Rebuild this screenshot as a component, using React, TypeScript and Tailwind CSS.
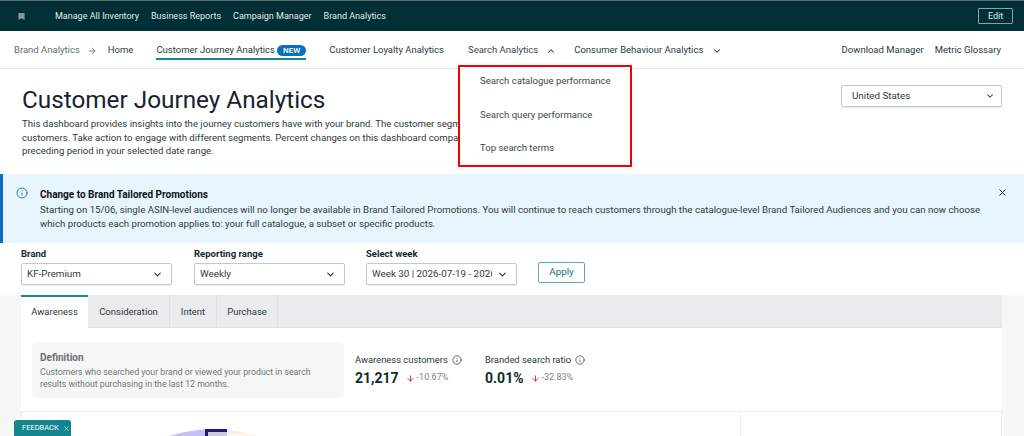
import { ArrowDown, ArrowRight, ChevronDown, ChevronUp, Info, X } from 'lucide-react';

const topLinks = ['Manage All Inventory', 'Business Reports', 'Campaign Manager', 'Brand Analytics'];
const menuItems = ['Search catalogue performance', 'Search query performance', 'Top search terms'];
const tabs = [
  { name: 'Consideration', width: 'w-[82px]' },
  { name: 'Intent', width: 'w-[47px]' },
  { name: 'Purchase', width: 'w-[61px]' },
];

const FilterSelect = ({ label, value, className = '' }: { label: string; value: string; className?: string }) => (
  <div className={`flex flex-col w-[151px] ${className}`}>
    <span className="text-[9.5px] leading-[14px] font-bold text-[#0f2b2e] mb-[2px]">{label}</span>
    <div className="flex items-center justify-between h-[22px] border border-[#c4c8c8] rounded-[2px] bg-white pl-[5px] pr-[8px] pt-[1px] shadow-[0_1px_1px_rgba(0,0,0,0.08)]">
      <span className="text-[9.8px] text-[#343b3c] whitespace-nowrap overflow-hidden w-[120px]">{value}</span>
      <ChevronDown className="w-[11px] h-[11px] text-[#333] shrink-0" strokeWidth={2.5} />
    </div>
  </div>
);

const Metric = ({ label, value, change }: { label: string; value: string; change: string }) => (
  <div className="flex flex-col">
    <div className="flex items-center gap-[4px] text-[9.4px] leading-[14px] text-[#2b3738]">
      {label}
      <Info className="w-[10px] h-[10px]" strokeWidth={1.75} />
    </div>
    <div className="flex items-center mt-[1px]">
      <span className="text-[14px] leading-[20px] font-bold text-[#0f2b2e]">{value}</span>
      <ArrowDown className="w-[9px] h-[9px] text-[#c7254e] ml-[7px]" strokeWidth={2.5} />
      <span className="text-[9px] text-[#7b8485] ml-[2px]">{change}</span>
    </div>
  </div>
);

export default function App() {
  return (
    <div className="relative w-[1024px] h-[436px] overflow-hidden bg-white font-['Roboto',sans-serif]">
      <header className="h-[31px] bg-[#002f36] border-t border-[#5c6b6d] flex items-center pl-[18px] pr-[11px]">
        <svg viewBox="0 0 8 8" className="w-[7px] h-[7px] text-[#8a9a9c]" fill="currentColor">
          <path d="M0.5 0h7v8L4 6 0.5 8z" />
        </svg>
        <nav className="flex gap-[12px] ml-[30px] pt-[1px] text-[9px] text-[#e4eaea]">
          {topLinks.map((link) => (
            <span key={link}>{link}</span>
          ))}
        </nav>
        <button className="ml-auto w-[35px] h-[16px] border border-[#8fa0a2] rounded-[1px] text-[9px] leading-[13px] text-[#e4eaea]">
          Edit
        </button>
      </header>

      <div className="h-[38px] border-b border-[#e3e6e6] flex items-center pl-[14px] pr-[23px] pt-[2px] text-[9.5px] text-[#2b3a3c] whitespace-nowrap">
        <span className="text-[#646f70]">Brand Analytics</span>
        <ArrowRight className="w-[10px] h-[10px] text-[#646f70] ml-[7px]" />
        <span className="ml-[11px]">Home</span>
        <div className="relative flex items-center ml-[23px] h-full">
          <span>Customer Journey Analytics</span>
          <span className="ml-[2px] px-[6px] h-[11px] rounded-full bg-[#0a6fc2] text-white text-[8px] leading-[11px] font-medium">NEW</span>
          <div className="absolute left-0 right-0 bottom-[8px] h-[2px] bg-[#138a94]" />
        </div>
        <span className="ml-[23px]">Customer Loyalty Analytics</span>
        <span className="ml-[24px] text-[#3c4849]">Search Analytics</span>
        <ChevronUp className="w-[10px] h-[10px] ml-[8px]" strokeWidth={2.5} />
        <span className="ml-[18px]">Consumer Behaviour Analytics</span>
        <ChevronDown className="w-[10px] h-[10px] ml-[9px]" strokeWidth={2.5} />
        <span className="ml-auto">Download Manager</span>
        <span className="ml-[11px]">Metric Glossary</span>
      </div>

      <section className="h-[105px] relative pl-[22px] pt-[15px]">
        <h1 className="text-[24.3px] leading-[32px] text-[#16232f]">Customer Journey Analytics</h1>
        <p className="mt-[1px] text-[9.65px] leading-[13.5px] text-[#2f3a3c] whitespace-nowrap">
          This dashboard provides insights into the journey customers have with your brand. The customer segments
          <br />
          customers. Take action to engage with different segments. Percent changes on this dashboard compare
          <br />
          preceding period in your selected date range.
        </p>
        <div className="absolute left-[841px] top-[16px] w-[161px] h-[22px] border border-[#c4c8c8] rounded-[2px] flex items-center justify-between pl-[10px] pr-[6px] text-[9.8px] text-[#343b3c] shadow-[0_1px_1px_rgba(0,0,0,0.08)]">
          United States
          <ChevronDown className="w-[10px] h-[10px]" strokeWidth={2.5} />
        </div>
      </section>

      <section className="h-[69px] bg-[#e6f5fe] border-l-[3px] border-[#0a6fc2] relative pl-[37px] pt-[14px] text-[9.68px] leading-[14.5px] text-[#2f3a3c]">
        <Info className="absolute left-[13px] top-[13px] w-[12px] h-[12px] text-[#0a6fc2]" strokeWidth={1.75} />
        <div className="font-bold text-[10px] text-[#0f1111]">Change to Brand Tailored Promotions</div>
        <div className="whitespace-nowrap">
          Starting on 15/06, single ASIN-level audiences will no longer be available in Brand Tailored Promotions. You will continue to reach customers through the catalogue-level Brand Tailored Audiences and you can now choose
        </div>
        <div>which products each promotion applies to: your full catalogue, a subset or specific products.</div>
        <X className="absolute left-[994px] top-[13px] w-[11px] h-[11px] text-[#16232f]" strokeWidth={2} />
      </section>

      <section className="h-[52px] flex items-start pl-[21px] pt-[4px] gap-[22px]">
        <FilterSelect label="Brand" value="KF-Premium" />
        <FilterSelect label="Reporting range" value="Weekly" />
        <FilterSelect label="Select week" value="Week 30 | 2026-07-19 - 2026" className="-ml-[1px]" />
        <button className="mt-[15px] -ml-[1px] w-[47px] h-[21px] border border-[#5fa8b0] rounded-[2px] text-[9.8px] text-[#14727c]">
          Apply
        </button>
      </section>

      <main className="h-[141px] bg-[#f6f7f7] pl-[21px] pr-[22px]">
        <div className="h-full bg-white">
          <div className="h-[33px] bg-[#eaebec] flex border-b border-[#e0e2e2] text-[9.5px] text-[#2f3a3c]">
            <div className="w-[67px] h-[33px] bg-white border-t-2 border-[#138a94] flex items-center justify-center">Awareness</div>
            {tabs.map((tab) => (
              <div key={tab.name} className={`${tab.width} pt-[2px] flex items-center justify-center border-r border-[#dcdfdf]`}>
                {tab.name}
              </div>
            ))}
          </div>
          <div className="flex pl-[11px] pt-[14px]">
            <div className="w-[312px] h-[56px] rounded-[4px] bg-[#f5f6f6] pl-[8px] pt-[9px]">
              <div className="text-[10px] leading-[14px] font-bold text-[#687172]">Definition</div>
              <div className="text-[8.75px] leading-[12px] text-[#6e7778] mt-[1px] whitespace-nowrap">
                Customers who searched your brand or viewed your product in search
                <br />
                results without purchasing in the last 12 months.
              </div>
            </div>
            <div className="flex ml-[11px] mt-[11px]">
              <div className="w-[130px]">
                <Metric label="Awareness customers" value="21,217" change="-10.67%" />
              </div>
              <Metric label="Branded search ratio" value="0.01%" change="-32.83%" />
            </div>
          </div>
          <div className="flex mt-[13px] h-[40px] overflow-hidden border-t border-l border-[#eceeee]">
            <div className="flex-1 relative overflow-hidden">
              <svg viewBox="0 0 120 20" className="absolute left-[130px] top-[17px] w-[120px] h-[20px]">
                <clipPath id="pie">
                  <circle cx="61" cy="139" r="139" />
                </clipPath>
                <g clipPath="url(#pie)">
                  <rect x="0" y="0" width="55" height="20" fill="#c5c1f7" />
                  <rect x="55" y="0" width="65" height="20" fill="#eeecfb" />
                  <rect x="75" y="4" width="45" height="16" fill="#fdf6e6" />
                </g>
                <rect x="53" y="0" width="22" height="20" fill="#1f1a6b" />
                <rect x="56" y="3" width="19" height="17" fill="#c9c9de" />
              </svg>
            </div>
            <div className="w-[262px] border-l border-r border-[#eceeee]" />
          </div>
        </div>
      </main>

      <div className="absolute left-[458px] top-[65px] w-[174px] h-[102px] bg-white border-2 border-[#f00000] rounded-[1px] flex flex-col gap-[17.5px] pl-[20px] pt-[6px] text-[9.55px] leading-[16px] text-[#3c4849] whitespace-nowrap">
        {menuItems.map((item) => (
          <span key={item}>{item}</span>
        ))}
      </div>

      <div className="absolute left-[14px] top-[420px] w-[57px] h-[16px] bg-[#14848e] rounded-t-[3px] flex items-center pl-[8px] gap-[4px] text-[7.5px] text-white">
        FEEDBACK
        <X className="w-[7px] h-[7px]" strokeWidth={2} />
      </div>
    </div>
  );
}
